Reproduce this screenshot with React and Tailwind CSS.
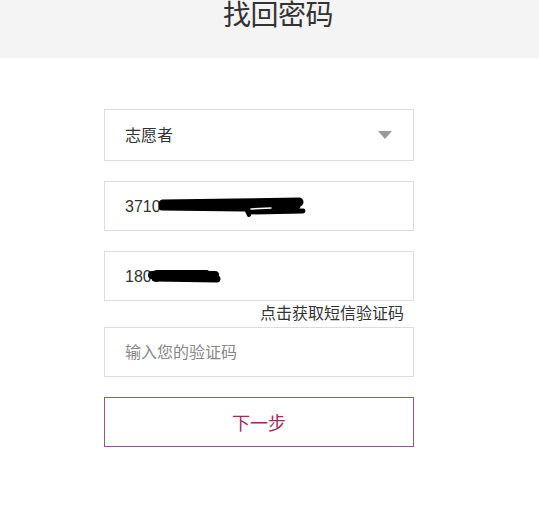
import React from 'react';

const font = { fontFamily: '"Liberation Sans", "Noto Sans CJK SC", sans-serif' };

// black marker strokes that hide the personal numbers
const Scribble = ({ paths, w, h, className }) => (
  <svg className={`absolute pointer-events-none ${className}`} width={w} height={h} viewBox={`0 0 ${w} ${h}`} fill="none">
    {paths.map(([d, sw, c], i) => (
      <path key={i} d={d} stroke={c || '#000'} strokeLinecap="round" strokeLinejoin="round" strokeWidth={sw} />
    ))}
  </svg>
);

const Field = ({ children, className = '' }) => (
  <div className={`relative flex items-center w-[310px] border border-[#dcdcdc] bg-white px-5 text-[16px] text-[#333] ${className}`}>
    {children}
  </div>
);

const App = () => {
  return (
    <div className="w-[539px] h-[531px] bg-white overflow-hidden" style={font}>
      <div className="h-[58px] bg-[#f4f4f4] flex justify-center pl-[17px]">
        <h1 className="text-[28px] leading-[30px] text-[#333] tracking-[-0.5px] mt-[1px]">找回密码</h1>
      </div>

      <div className="flex flex-col items-start pl-[104px] pt-[51px]">
        <Field className="h-[52px] justify-between">
          <span className="pt-[1px]">志愿者</span>
          <span className="w-0 h-0 border-l-[7px] border-r-[7px] border-t-[8px] border-l-transparent border-r-transparent border-t-[#999] mr-[1px]" />
        </Field>

        <Field className="h-[50px] mt-[20px]">
          <span className="pt-[1px]">3710</span>
          <Scribble
            className="left-[50px] top-[15px]"
            w={152}
            h={22}
            paths={[
              ['M8 7 L80 6 L144 5', 9],
              ['M7 10 L88 11 L142 9', 7],
              ['M94 15 L148 14', 5],
              ['M92 14 L94 18', 4],
              ['M96 12 L116 11', 1.5, '#fff'],
            ]}
          />
        </Field>

        <Field className="h-[50px] mt-[20px]">
          <span className="pt-[1px]">1800</span>
          <Scribble
            className="left-[42px] top-[15px]"
            w={76}
            h={18}
            paths={[
              ['M5 8 L68 8', 8],
              ['M8 11 L70 12', 7],
              ['M10 5 L60 5', 4],
            ]}
          />
        </Field>

        <div className="w-[310px] h-[26px] flex items-center justify-end pr-[10px]">
          <span className="text-[16px] text-[#333] leading-none">点击获取短信验证码</span>
        </div>

        <Field className="h-[50px] text-[#888]">
          <span className="pt-[1px]">输入您的验证码</span>
        </Field>

        <button className="mt-[20px] w-[310px] h-[50px] border border-[#8a5a8a] bg-white text-[18px] text-[#9b2d5c] pt-[4px]">
          下一步
        </button>
      </div>
    </div>
  );
};

export default App;
